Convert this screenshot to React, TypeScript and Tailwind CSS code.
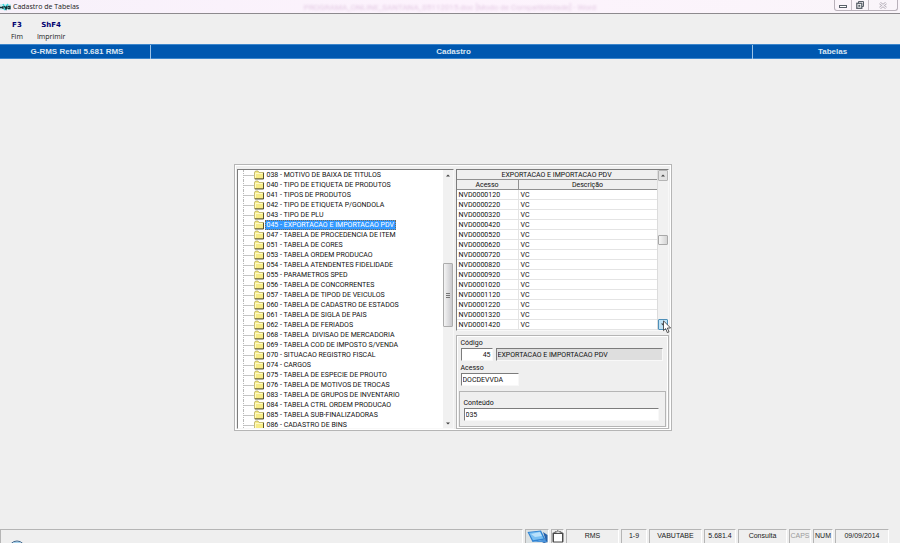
import type { ReactNode } from "react";
import clsx from "clsx";

const TABLES = [
  "038 - MOTIVO DE BAIXA DE TITULOS",
  "040 - TIPO DE ETIQUETA DE PRODUTOS",
  "041 - TIPOS DE PRODUTOS",
  "042 - TIPO DE ETIQUETA P/GONDOLA",
  "043 - TIPO DE PLU",
  "045 - EXPORTACAO E IMPORTACAO PDV",
  "047 - TABELA DE PROCEDENCIA DE ITEM",
  "051 - TABELA DE CORES",
  "053 - TABELA ORDEM PRODUCAO",
  "054 - TABELA ATENDENTES FIDELIDADE",
  "055 - PARAMETROS SPED",
  "056 - TABELA DE CONCORRENTES",
  "057 - TABELA DE TIPOD DE VEICULOS",
  "060 - TABELA DE CADASTRO DE ESTADOS",
  "061 - TABELA DE SIGLA DE PAIS",
  "062 - TABELA DE FERIADOS",
  "068 - TABELA  DIVISAO DE MERCADORIA",
  "069 - TABELA COD DE IMPOSTO S/VENDA",
  "070 - SITUACAO REGISTRO FISCAL",
  "074 - CARGOS",
  "075 - TABELA DE ESPECIE DE PROUTO",
  "076 - TABELA DE MOTIVOS DE TROCAS",
  "083 - TABELA DE GRUPOS DE INVENTARIO",
  "084 - TABELA CTRL ORDEM PRODUCAO",
  "085 - TABELA SUB-FINALIZADORAS",
  "086 - CADASTRO DE BINS",
];

const SELECTED = "045";

const ROWS = [
  "NVD0000120",
  "NVD0000220",
  "NVD0000320",
  "NVD0000420",
  "NVD0000520",
  "NVD0000620",
  "NVD0000720",
  "NVD0000820",
  "NVD0000920",
  "NVD0001020",
  "NVD0001120",
  "NVD0001220",
  "NVD0001320",
  "NVD0001420",
];

const SUNKEN = "border border-t-[#7c7c7c] border-l-[#7c7c7c] border-r-[#f8f8f8] border-b-[#f8f8f8]";
const HEAD_CELL = "border-b border-[#909090] px-0 pt-px pb-0 font-normal leading-[8px]";
const BODY_CELL = "border-b border-[#e4e4e4] pt-px pr-0 pb-0 pl-[2px] leading-[8px]";

function FolderIcon() {
  return (
    <svg width="10" height="10" viewBox="0 0 10 10" className="shrink-0">
      <path d="M0.5 8.5V2.5L1.5 1H4L5 2.5H9.5V8.5Z" fill="#f7ec86" stroke="#a89c48" strokeWidth="0.7" />
      <path d="M1.4 8V3.4H8.6" fill="none" stroke="#fffcd0" strokeWidth="0.9" />
      <path d="M9.5 2.8V9H0.8" fill="none" stroke="#4b4620" strokeWidth="0.9" />
    </svg>
  );
}

function Arrow({ up = false }: { up?: boolean }) {
  return (
    <svg width="4" height="3" viewBox="0 0 4 3">
      <path d={up ? "M0 2.6L2 0.4L4 2.6Z" : "M0 0.4L2 2.6L4 0.4Z"} fill="#404040" />
    </svg>
  );
}

function TitleBar() {
  return (
    <header className="relative flex h-[14px] justify-between overflow-hidden border-b border-[#8d8a8e] bg-linear-to-r from-[#f7f1fa] via-[#fdf3fd] to-[#faf5fa]">
      <p
        aria-hidden="true"
        className="absolute inset-x-0 top-[3px] text-center text-[8px] leading-[10px] whitespace-nowrap text-[#e4cbe4] blur-[1px]"
      >
        PROGRAMA_ONLINE_SANTANA_05112015.doc [Modo de Compatibilidade] - Word
      </p>
      <div className="flex items-center">
        <svg width="13" height="11" viewBox="0 0 13 11">
          <rect x="0" y="3" width="11" height="6" fill="#c9eef2" />
          <path d="M3 3L6 9M8 3L4 9" stroke="#35d3dc" strokeWidth="1.4" />
          <path d="M0 6.5H2.5M3 5V8M4.5 5L6 8L7 5V8M8 7.5H10V5.5H8" stroke="#123036" strokeWidth="1.3" fill="none" />
        </svg>
        <h1 className="font-['Open_Sans',sans-serif] text-[7px] leading-[10px] text-[#202020]">Cadastro de Tabelas</h1>
      </div>
      <div className="mr-[2px] flex h-[11px] rounded-b-[3px] border border-t-0 border-[#b9b1ba]">
        <button aria-label="Minimizar" className="flex w-[17px] items-center justify-center border-r border-[#c5bdc6]">
          <svg width="8" height="8" viewBox="0 0 8 8">
            <rect x="0.5" y="4.5" width="7" height="2" fill="#fff" stroke="#596069" />
          </svg>
        </button>
        <button aria-label="Restaurar" className="flex w-[17px] items-center justify-center border-r border-[#c5bdc6]">
          <svg width="8" height="8" viewBox="0 0 8 8" fill="none" stroke="#596069">
            <path d="M2.5 2V0.5H7.5V5.5H6" />
            <rect x="0.8" y="2.3" width="5" height="5" fill="#fff" strokeWidth="1.3" />
            <rect x="2.8" y="4.3" width="1" height="1" />
          </svg>
        </button>
        <button aria-label="Fechar" className="flex w-7 items-center justify-center">
          <svg width="8" height="7" viewBox="0 0 8 7" fill="none">
            <path d="M1 1L7 6M7 1L1 6" stroke="#aaa4ad" strokeWidth="2.4" />
            <path d="M1 1L7 6M7 1L1 6" stroke="#f7f2f8" strokeWidth="1.1" />
          </svg>
        </button>
      </div>
    </header>
  );
}

function MenuItem({ hotkey, label }: { hotkey: string; label: string }) {
  return (
    <button className="flex flex-col items-center gap-[2px] leading-[10px]">
      <span className="font-['DejaVu_Sans',sans-serif] text-[7px] font-bold text-[#000070]">{hotkey}</span>
      <span className="font-['Open_Sans',sans-serif] text-[7px] text-[#202020]">{label}</span>
    </button>
  );
}

function Tree() {
  return (
    <div className={clsx("flex h-[260px] w-[217px] bg-white", SUNKEN)}>
      <ul className="min-w-0 flex-1 overflow-hidden pl-[5px]">
        {TABLES.map((name) => (
          <li key={name} className="flex h-[10px] items-center border-l border-dotted border-[#b8b8b8]">
            <span className="w-[10px] shrink-0 border-t border-[#c4c4c4]" />
            <FolderIcon />
            <button
              className={clsx(
                "ml-px h-[10px] px-[2px] text-left leading-[10px] whitespace-pre",
                name.startsWith(SELECTED) && "bg-[#3399ff] text-white outline-1 -outline-offset-1 outline-dotted outline-[#7a6a50]",
              )}
            >
              {name}
            </button>
          </li>
        ))}
      </ul>
      <div className="flex w-[10px] flex-col items-center bg-[#f1f1f1]">
        <button aria-label="Subir" className="flex h-[10px] items-center">
          <Arrow up />
        </button>
        <div className="mt-[83px] flex h-16 w-full flex-col items-center justify-center gap-px rounded-[1px] border border-[#acacac] bg-linear-to-r from-[#f4f4f4] to-[#c9c9cd]">
          <span className="h-px w-1 bg-[#777]" />
          <span className="h-px w-1 bg-[#777]" />
          <span className="h-px w-1 bg-[#777]" />
        </div>
        <button aria-label="Descer" className="mt-auto flex h-[10px] items-center">
          <Arrow />
        </button>
      </div>
    </div>
  );
}

function Grid() {
  return (
    <div className={clsx("flex h-[162px] bg-white", SUNKEN)}>
      <table className="h-[160px] min-w-0 flex-1 table-fixed border-separate border-spacing-0">
        <colgroup>
          <col className="w-[62px]" />
          <col className="w-[138px]" />
        </colgroup>
        <thead className="bg-[#efefef]">
          <tr className="h-[10px]">
            <th colSpan={2} className={HEAD_CELL}>
              EXPORTACAO E IMPORTACAO PDV
            </th>
          </tr>
          <tr className="h-[10px]">
            <th className={clsx("border-r", HEAD_CELL)}>Acesso</th>
            <th className={HEAD_CELL}>Descrição</th>
          </tr>
        </thead>
        <tbody>
          {ROWS.map((code) => (
            <tr key={code} className="h-[10px]">
              <td className={clsx("border-r", BODY_CELL)}>{code}</td>
              <td className={BODY_CELL}>VC</td>
            </tr>
          ))}
        </tbody>
      </table>
      <div className="flex w-[11px] flex-col border-l border-[#dcdcdc] bg-[#f1f1f1]">
        <button aria-label="Subir" className="flex h-[11px] items-center justify-center rounded-[1px] border border-[#b4b4b4] bg-[#e2e2e2]">
          <Arrow up />
        </button>
        <div className="mt-[54px] h-[10px] rounded-[1px] border border-[#a8a8a8] bg-linear-to-r from-[#f6f6f6] to-[#d4d4d4]" />
        <button
          aria-label="Descer"
          className="relative mt-auto flex h-[11px] items-center justify-center rounded-[1px] border border-[#4f8fb8] bg-[#bfe3f6]"
        >
          <Arrow />
          <svg width="9" height="14" viewBox="0 0 9 14" className="absolute top-0 left-1">
            <path d="M0.5 0.8V10.6L2.7 8.6L4.3 12.6L6 11.9L4.4 8H7.6Z" fill="#fff" stroke="#303030" strokeWidth="0.8" />
          </svg>
        </button>
      </div>
    </div>
  );
}

function Form() {
  return (
    <form className="flex h-[94px] flex-col border border-[#b5b5b5] px-1 pt-[2px] outline-1 -outline-offset-2 outline-white">
      <label htmlFor="codigo" className="leading-[10px]">
        Código
      </label>
      <div className="flex gap-[3px]">
        <input id="codigo" defaultValue="45" className={clsx("h-[13px] w-8 bg-white px-px text-right", SUNKEN)} />
        <input
          aria-label="Descrição da tabela"
          readOnly
          defaultValue="EXPORTACAO E IMPORTACAO PDV"
          className={clsx("mr-px h-[13px] min-w-0 flex-1 bg-[#dedede] px-px", SUNKEN)}
        />
      </div>
      <label htmlFor="acesso" className="mt-[2px] leading-[10px]">
        Acesso
      </label>
      <input id="acesso" defaultValue="DOCDEVVDA" className={clsx("h-[13px] w-[58px] bg-white px-px", SUNKEN)} />
      <div className="-mx-[2px] mt-[5px] flex h-[36px] flex-col border border-[#b5b5b5] px-1 pt-[6px]">
        <label htmlFor="conteudo" className="leading-[10px]">
          Conteúdo
        </label>
        <input id="conteudo" defaultValue="035" className={clsx("mr-[2px] h-[13px] bg-white px-px", SUNKEN)} />
      </div>
    </form>
  );
}

function StatusCell({ className, children }: { className: string; children?: ReactNode }) {
  return (
    <div
      className={clsx(
        "flex h-[14px] items-center justify-center border-t border-l border-r border-t-[#b5b5b5] border-l-[#b5b5b5] border-r-white",
        className,
      )}
    >
      {children}
    </div>
  );
}

function StatusBar() {
  return (
    <footer className="flex h-[14px] gap-[2px] overflow-hidden pr-[11px] font-['Liberation_Sans',sans-serif] text-[7px] text-[#202020]">
      <StatusCell className="flex-1 justify-start!">
        <svg width="17" height="14" viewBox="0 0 17 14" className="ml-2">
          <circle cx="8" cy="19" r="8" fill="#d8eefb" stroke="#3f668c" />
          <path d="M5 13H11" stroke="#76b9df" />
        </svg>
      </StatusCell>
      <StatusCell className="w-6 bg-[#dce2e4]">
        <svg width="21" height="13" viewBox="0 0 21 13">
          <path d="M0.5 2L14 0.5L18.5 9.5L5.5 12Z" fill="#2f83d2" />
          <path d="M2 2.7L13 1.4L16.5 8.4L6 10.3Z" fill="#79bff2" />
          <path d="M4 4L13 2L15 6L8 7Z" fill="#b9e1fb" />
          <path d="M16 2L20.5 5V12L17 13L13 11L18.5 9.5Z" fill="#2462ac" />
          <path d="M6 12L18 9.5L20 12Z" fill="#4b94dc" />
        </svg>
      </StatusCell>
      <StatusCell className="w-[13px]">
        <svg width="12" height="13" viewBox="0 0 12 13" className="shrink-0">
          <rect x="0.5" y="2.5" width="11" height="10" rx="1" fill="#4a4a4a" />
          <rect x="2" y="4" width="8" height="7.5" fill="#fff" />
          <path d="M3 3.5V1.8H4.7L6 0.5L7.3 1.8H9V3.5Z" fill="#ddd" stroke="#3c3c3c" strokeWidth="0.8" />
        </svg>
      </StatusCell>
      <StatusCell className="w-[53px]">RMS</StatusCell>
      <StatusCell className="w-[26px]">1-9</StatusCell>
      <StatusCell className="w-[53px]">VABUTABE</StatusCell>
      <StatusCell className="w-8">5.681.4</StatusCell>
      <StatusCell className="w-[49px]">Consulta</StatusCell>
      <StatusCell className="w-[22px] text-[#9a9a9a]">CAPS</StatusCell>
      <StatusCell className="w-5">NUM</StatusCell>
      <StatusCell className="w-[54px]">09/09/2014</StatusCell>
    </footer>
  );
}

export default function App() {
  return (
    <div className="flex min-h-screen flex-col bg-[#efefef] font-[Roboto,sans-serif] text-[7px] text-[#101010]">
      <TitleBar />
      <nav className="flex h-[30px] items-start gap-[14px] pt-[6px] pl-[11px]">
        <MenuItem hotkey="F3" label="Fim" />
        <MenuItem hotkey="ShF4" label="Imprimir" />
      </nav>
      <div className="grid h-[15px] grid-cols-[151px_1fr_147px] border-y border-[#3c86cc] bg-[#0058b0] text-center font-['Liberation_Sans',sans-serif] text-[8px] leading-[14px] font-bold text-[#d9e6f3]">
        <span className="border-r border-[#9cc3e6] pl-1">G-RMS Retail 5.681 RMS</span>
        <span className="border-r border-[#9cc3e6] pl-1">Cadastro</span>
        <span className="pl-3">Tabelas</span>
      </div>
      <main className="flex flex-1 items-center justify-center pt-[7px] pl-[5px]">
        <div className="flex gap-[2px] border border-[#b5b5b5] px-[2px] pt-1 pb-px outline-1 -outline-offset-2 outline-white">
          <Tree />
          <div className="flex w-[213px] flex-col gap-1">
            <Grid />
            <Form />
          </div>
        </div>
      </main>
      <StatusBar />
    </div>
  );
}
